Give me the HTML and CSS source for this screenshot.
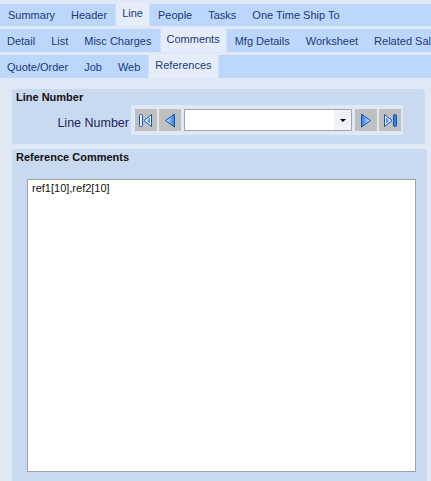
FILE: index.html
```html
<!DOCTYPE html>
<html>
<head>
<meta charset="utf-8">
<link rel="stylesheet" href="styles.css">
</head>
<body>
<div class="tabs">
  <div class="tabrow row1">
    <span class="tab">Summary</span>
    <span class="tab">Header</span>
    <span class="tab active">Line</span>
    <span class="tab">People</span>
    <span class="tab">Tasks</span>
    <span class="tab">One Time Ship To</span>
  </div>
  <div class="tabrow">
    <span class="tab">Detail</span>
    <span class="tab">List</span>
    <span class="tab">Misc Charges</span>
    <span class="tab active">Comments</span>
    <span class="tab">Mfg Details</span>
    <span class="tab">Worksheet</span>
    <span class="tab">Related Sales</span>
  </div>
  <div class="tabrow">
    <span class="tab">Quote/Order</span>
    <span class="tab">Job</span>
    <span class="tab">Web</span>
    <span class="tab active">References</span>
  </div>
</div>

<div class="panel panel-line">
  <div class="panel-title">Line Number</div>
  <div class="nav-row">
    <span class="nav-label">Line Number</span>
    <div class="nav-box">
      <button class="nav-btn" aria-label="First">
        <svg width="22" height="22" viewBox="0 0 22 22">
          <defs>
            <linearGradient id="g1" x1="0" y1="0" x2="1" y2="0">
              <stop offset="0" stop-color="#bfe3ff"/>
              <stop offset="1" stop-color="#2f86e8"/>
            </linearGradient>
          </defs>
          <rect x="4.5" y="5.5" width="3" height="12" rx="1.2" fill="#e8f5ff" stroke="#1453b8"/>
          <path d="M16.5 5.5 L9 11.5 L16.5 17.5 Z" fill="#e8f5ff" stroke="#1453b8" stroke-linejoin="round"/>
          <path d="M15 8.5 L11 11.5 L15 14.5 Z" fill="url(#g1)"/>
        </svg>
      </button>
      <button class="nav-btn" aria-label="Previous">
        <svg width="22" height="22" viewBox="0 0 22 22">
          <defs>
            <linearGradient id="g2" x1="0" y1="0" x2="1" y2="0">
              <stop offset="0" stop-color="#d3ecff"/>
              <stop offset="1" stop-color="#2b7fe3"/>
            </linearGradient>
          </defs>
          <path d="M15.5 5 L6.5 11.5 L15.5 18 Z" fill="url(#g2)" stroke="#1453b8" stroke-linejoin="round"/>
        </svg>
      </button>
      <div class="combo">
        <span class="combo-input"></span>
        <span class="combo-trigger"><span class="caret"></span></span>
      </div>
      <button class="nav-btn" aria-label="Next">
        <svg width="22" height="22" viewBox="0 0 22 22">
          <defs>
            <linearGradient id="g3" x1="0" y1="0" x2="1" y2="0">
              <stop offset="0" stop-color="#2b7fe3"/>
              <stop offset="1" stop-color="#d3ecff"/>
            </linearGradient>
          </defs>
          <path d="M6.5 5 L15.5 11.5 L6.5 18 Z" fill="url(#g3)" stroke="#1453b8" stroke-linejoin="round"/>
        </svg>
      </button>
      <button class="nav-btn" aria-label="Last">
        <svg width="22" height="22" viewBox="0 0 22 22">
          <defs>
            <linearGradient id="g4" x1="0" y1="0" x2="1" y2="0">
              <stop offset="0" stop-color="#2b7fe3"/>
              <stop offset="1" stop-color="#bfe3ff"/>
            </linearGradient>
          </defs>
          <path d="M5.5 5.5 L13 11.5 L5.5 17.5 Z" fill="#e8f5ff" stroke="#1453b8" stroke-linejoin="round"/>
          <path d="M7 8.5 L11 11.5 L7 14.5 Z" fill="url(#g4)"/>
          <rect x="14.5" y="5.5" width="3" height="12" rx="1.2" fill="#2f86e8" stroke="#1453b8"/>
        </svg>
      </button>
    </div>
  </div>
</div>

<div class="panel panel-comments">
  <div class="panel-title">Reference Comments</div>
  <div class="comments-box">ref1[10],ref2[10]</div>
</div>
</body>
</html>
```

FILE: styles.css
```css
html, body {
  margin: 0;
  padding: 0;
  background: #dfe8f5;
  font-family: "Liberation Sans", Arial, sans-serif;
  font-size: 11px;
  height: 100%;
  overflow: hidden;
}

.tabs {
  padding-top: 2px;
  display: flex;
  flex-direction: column;
  gap: 2px;
}

.tabrow {
  display: flex;
  align-items: stretch;
  height: 24px;
  background: linear-gradient(to bottom, #dfe8f5 0, #dfe8f5 1px, #bdd6fb 1px);
  white-space: nowrap;
  overflow: hidden;
}

.row1 {
  background: linear-gradient(to bottom, #dfe8f5 0, #dfe8f5 2px, #bdd6fb 2px);
}

.tab {
  display: flex;
  align-items: center;
  padding: 1px 8px 0 8px;
  color: #1c3a78;
}

.tabrow .tab:first-child {
  padding-left: 7px;
}

.row1 .tab:first-child {
  padding-left: 8px;
}

.tab.active {
  background: #e4edf9;
  border-radius: 3px 3px 0 0;
  padding: 0 7px 3px 7px;
  box-shadow: inset 1px 0 0 #d2e0f3, inset -1px 0 0 #d2e0f3;
}

.panel {
  background: #c9daf0;
  border-radius: 3px;
  margin-left: 12px;
}

.panel-title {
  font-weight: bold;
  color: #111;
  font-size: 11px;
  line-height: 13px;
  padding-left: 4px;
}

.panel-line {
  margin-top: 11px;
  width: 413px;
  height: 55px;
  padding-top: 2px;
  box-sizing: border-box;
}

.nav-row {
  display: flex;
  align-items: center;
  margin-top: 1px;
}

.nav-label {
  width: 117px;
  text-align: right;
  font-size: 12.5px;
  color: #221f5c;
  padding-top: 5px;
}

.nav-box {
  margin-left: 2px;
  width: 272px;
  height: 30px;
  background: #dfe8f5;
  display: flex;
  align-items: center;
  padding-left: 4px;
  gap: 2px;
  box-sizing: border-box;
}

.nav-btn {
  width: 22px;
  height: 22px;
  padding: 0;
  border: none;
  background: #c0c0c0;
  display: block;
}

.nav-btn svg {
  display: block;
}

.combo {
  display: flex;
  width: 168px;
  height: 22px;
  border: 1px solid #a2a6ab;
  box-sizing: border-box;
  background: #fff;
  margin: 0 1px;
}

.combo-input {
  flex: 1;
}

.combo-trigger {
  width: 17px;
  background: #eef3fa;
  display: flex;
  align-items: center;
  justify-content: center;
}

.caret {
  width: 0;
  height: 0;
  border-left: 3px solid transparent;
  border-right: 3px solid transparent;
  border-top: 3px solid #000;
}

.panel-comments {
  margin-top: 5px;
  width: 415px;
  height: 340px;
  padding-top: 2px;
  box-sizing: border-box;
}

.comments-box {
  margin: 15px 0 0 15px;
  width: 389px;
  height: 293px;
  box-sizing: border-box;
  background: #fff;
  border: 1px solid #a0a0a0;
  padding: 2px 4px;
  font-size: 11px;
  line-height: 13px;
  color: #111;
}
```
